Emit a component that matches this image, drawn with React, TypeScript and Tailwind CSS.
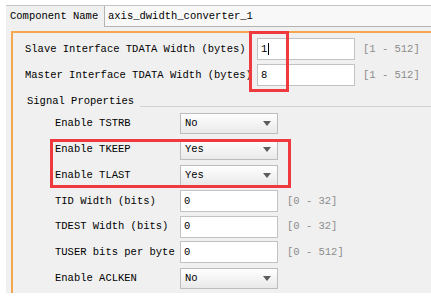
import React from 'react';

const Arrow = () => (
  <svg width="8" height="5" viewBox="0 0 8 5" className="shrink-0">
    <polygon points="0,0 8,0 4,5" fill="#5c5c5c" />
  </svg>
);

const TextBox = ({ value, cursor = false }: { value: string; cursor?: boolean }) => (
  <div className="flex h-[22px] w-[98px] shrink-0 items-center border border-[#c2c2c2] bg-white pl-[3px]">
    <span>{value}</span>
    {cursor && <span className="ml-[1px] h-[12px] w-px bg-black" />}
  </div>
);

const Dropdown = ({ value }: { value: string }) => (
  <div className="flex h-[21px] w-[98px] shrink-0 items-center justify-between border border-[#bcbcbc] bg-gradient-to-b from-white to-[#e9e9e9] pl-[4px] pr-[6px]">
    <span>{value}</span>
    <Arrow />
  </div>
);

const Range = ({ text, className }: { text: string; className: string }) => (
  <span className={`${className} text-[#8c8c8c]`}>{text}</span>
);

type SignalRow = { label: string; kind: 'select' | 'input'; value: string; range?: string };

const signals: SignalRow[] = [
  { label: 'Enable TSTRB', kind: 'select', value: 'No' },
  { label: 'Enable TKEEP', kind: 'select', value: 'Yes' },
  { label: 'Enable TLAST', kind: 'select', value: 'Yes' },
  { label: 'TID Width (bits)', kind: 'input', value: '0', range: '[0 - 32]' },
  { label: 'TDEST Width (bits)', kind: 'input', value: '0', range: '[0 - 32]' },
  { label: 'TUSER bits per byte', kind: 'input', value: '0', range: '[0 - 512]' },
  { label: 'Enable ACLKEN', kind: 'select', value: 'No' },
];

export default function App() {
  return (
    <div className="relative h-[297px] w-[431px] overflow-hidden bg-white pt-[5px] pl-[6px] font-['Liberation_Mono',monospace] text-[10.5px] leading-none text-black">
      <div className="h-[288px] border-t border-[#c4c4c4] bg-[#f0f0f0]">
        {/* component name */}
        <div className="flex h-[21px] items-center">
          <span className="w-[98px] shrink-0 pl-[4px] whitespace-nowrap">Component Name</span>
          <div className="flex h-[21px] flex-1 items-center border border-t-0 border-r-0 border-[#b4b4b4] bg-[#f8f8f8] pl-[3px]">
            axis_dwidth_converter_1
          </div>
        </div>

        {/* orange frame */}
        <div className="mt-[4px] ml-[5px] h-[262px] border-t-2 border-l-2 border-[#f6a64e]">
          <div className="flex flex-col gap-[4px] pt-[5px]">
            <div className="flex h-[22px] items-center">
              <span className="w-[244px] shrink-0 overflow-hidden whitespace-nowrap pl-[12px]">
                Slave Interface TDATA Width (bytes)
              </span>
              <TextBox value="1" cursor />
              <Range text="[1 - 512]" className="ml-[8px] whitespace-nowrap" />
            </div>
            <div className="flex h-[22px] items-center">
              <span className="w-[244px] shrink-0 overflow-hidden whitespace-nowrap pl-[12px]">
                Master Interface TDATA Width (bytes)
              </span>
              <TextBox value="8" />
              <Range text="[1 - 512]" className="ml-[8px] whitespace-nowrap" />
            </div>
          </div>

          <div className="mt-[9px] flex h-[13px] items-center pl-[14px]">
            <span className="whitespace-nowrap">Signal Properties</span>
            <div className="ml-[6px] mb-[1px] flex-1 self-end border-b border-[#d2d2d2]" />
          </div>

          <div className="mt-[5px] flex flex-col gap-[4.8px]">
            {signals.map((s) => (
              <div key={s.label} className="flex h-[21px] items-center">
                <span className="w-[167px] shrink-0 whitespace-nowrap pl-[42px]">{s.label}</span>
                {s.kind === 'select' ? <Dropdown value={s.value} /> : <TextBox value={s.value} />}
                {s.range && <Range text={s.range} className="ml-[9px] whitespace-nowrap" />}
              </div>
            ))}
          </div>
        </div>
      </div>

      {/* highlight boxes */}
      <div className="absolute left-[249px] top-[31px] h-[61px] w-[40px] border-[3px] border-[#ee3a3e]" />
      <div className="absolute left-[50px] top-[139px] h-[49px] w-[241px] border-[3px] border-[#ee3a3e]" />
    </div>
  );
}
